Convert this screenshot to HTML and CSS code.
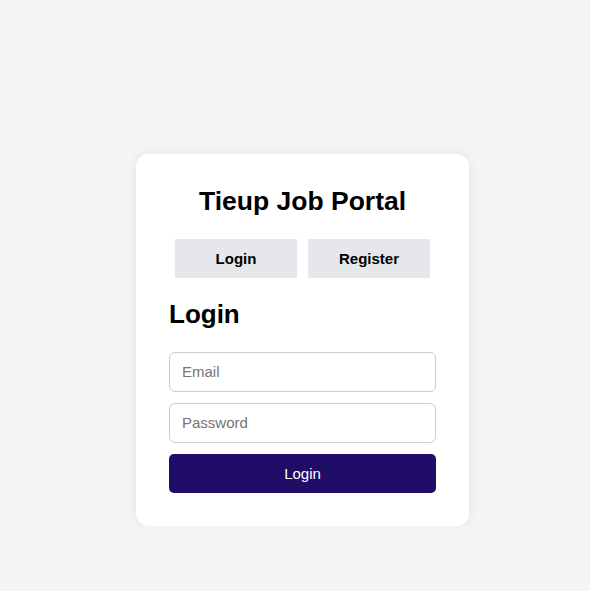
FILE: index.html
```html
<!DOCTYPE html>
<html>
<head>
<meta charset="utf-8">
<link rel="stylesheet" href="styles.css">
</head>
<body>
<main class="page">
  <section class="card">
    <h1 class="title">Tieup Job Portal</h1>
    <div class="tabs">
      <button class="tab">Login</button>
      <button class="tab">Register</button>
    </div>
    <h2 class="heading">Login</h2>
    <form class="form">
      <input class="field" type="email" placeholder="Email">
      <input class="field" type="password" placeholder="Password">
      <button class="submit" type="button">Login</button>
    </form>
  </section>
</main>
</body>
</html>
```
FILE: styles.css
```css
html, body {
  margin: 0;
  padding: 0;
}
body {
  background: #f3f4f6;
  font-family: "Liberation Sans", Arial, sans-serif;
  color: #000;
}
.page {
  padding: 154px 0 0 136px;
}
.card {
  width: 333px;
  box-sizing: border-box;
  padding: 33px;
  background: #fff;
  border-radius: 12px;
  box-shadow: 0 0 8px rgba(0, 0, 0, 0.08);
}
.title {
  margin: 0;
  font-size: 26.5px;
  line-height: 29px;
  font-weight: bold;
  text-align: center;
}
.tabs {
  display: flex;
  justify-content: center;
  gap: 11px;
  margin-top: 23px;
}
.tab {
  width: 122px;
  height: 39px;
  border: none;
  background: #e5e7eb;
  font-family: inherit;
  font-size: 15px;
  font-weight: bold;
  color: #000;
  padding: 0;
}
.heading {
  margin: 21px 0 0;
  font-size: 26px;
  line-height: 30px;
  font-weight: bold;
}
.form {
  display: flex;
  flex-direction: column;
  gap: 11px;
  margin-top: 23px;
}
.field {
  height: 40px;
  box-sizing: border-box;
  border: 1px solid #cccccc;
  border-radius: 6px;
  padding: 0 12px 1px;
  font-family: inherit;
  font-size: 15px;
  margin: 0;
}
.field::placeholder {
  color: #757575;
}
.submit {
  height: 39px;
  border: none;
  border-radius: 5px;
  background: #200d67;
  color: #fff;
  font-family: inherit;
  font-size: 15px;
  padding: 0 0 1px;
}
```
